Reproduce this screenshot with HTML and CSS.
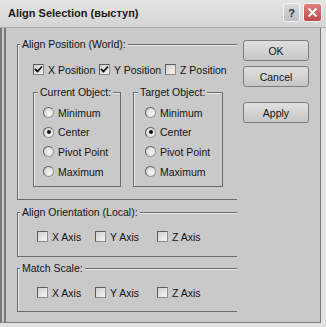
FILE: index.html
```html
<!DOCTYPE html>
<html lang="en">
<head>
  <meta charset="UTF-8">
  <title>Align Selection</title>
  <link rel="stylesheet" href="styles.css">
</head>
<body>
  <div class="dialog">
    <div class="titlebar">
      <span class="title">Align Selection (выступ)</span>
      <div class="title-buttons">
        <span class="tbtn help">?</span>
        <span class="tbtn close">
          <svg width="11" height="11" viewBox="0 0 11 11"><path d="M1.5 1.5 L9.5 9.5 M9.5 1.5 L1.5 9.5" stroke="#fff" stroke-width="2" /></svg>
        </span>
      </div>
    </div>

    <div class="content">
      <div class="groups">

        <fieldset class="group pos">
          <legend>Align Position (World):</legend>
          <div class="inner pos-inner">
            <div class="checks">
              <label class="check w66"><span class="box"><svg width="9" height="9" viewBox="0 0 9 9"><path d="M1 4 L3.5 6.5 L8 1.5" stroke="#111" stroke-width="1.8" fill="none" /></svg></span>X Position</label>
              <label class="check w66"><span class="box"><svg width="9" height="9" viewBox="0 0 9 9"><path d="M1 4 L3.5 6.5 L8 1.5" stroke="#111" stroke-width="1.8" fill="none" /></svg></span>Y Position</label>
              <label class="check"><span class="box"></span>Z Position</label>
            </div>
            <div class="subgroups">
              <fieldset class="sub current">
                <legend>Current Object:</legend>
                <div class="radios">
                  <div class="radio"><span class="dot"></span>Minimum</div>
                  <div class="radio"><span class="dot on"></span>Center</div>
                  <div class="radio"><span class="dot"></span>Pivot Point</div>
                  <div class="radio"><span class="dot"></span>Maximum</div>
                </div>
              </fieldset>
              <fieldset class="sub target">
                <legend>Target Object:</legend>
                <div class="radios">
                  <div class="radio"><span class="dot"></span>Minimum</div>
                  <div class="radio"><span class="dot on"></span>Center</div>
                  <div class="radio"><span class="dot"></span>Pivot Point</div>
                  <div class="radio"><span class="dot"></span>Maximum</div>
                </div>
              </fieldset>
            </div>
          </div>
        </fieldset>

        <fieldset class="group orient">
          <legend>Align Orientation (Local):</legend>
          <div class="inner axes">
            <label class="check w58"><span class="box"></span>X Axis</label>
            <label class="check w62"><span class="box"></span>Y Axis</label>
            <label class="check"><span class="box"></span>Z Axis</label>
          </div>
        </fieldset>

        <fieldset class="group scale">
          <legend>Match Scale:</legend>
          <div class="inner axes">
            <label class="check w58"><span class="box"></span>X Axis</label>
            <label class="check w62"><span class="box"></span>Y Axis</label>
            <label class="check"><span class="box"></span>Z Axis</label>
          </div>
        </fieldset>

      </div>

      <div class="buttons">
        <button class="btn">OK</button>
        <button class="btn">Cancel</button>
        <button class="btn apply">Apply</button>
      </div>
    </div>
  </div>
</body>
</html>
```

FILE: styles.css
```css
body {
  margin: 0;
  background: #e2e2e2;
  font-family: 'Liberation Sans', Arial, sans-serif;
  font-size: 10.5px;
  color: #141414;
}

.dialog {
  width: 326px;
  height: 327px;
}

/* title bar */
.titlebar {
  height: 28px;
  box-sizing: border-box;
  display: flex;
  align-items: center;
  justify-content: space-between;
  padding: 0 4px 2px 8px;
  background: linear-gradient(#e4e4e4, #d4d4d4);
  border-bottom: 1px solid #a8a8a8;
}

.title {
  font-weight: bold;
  font-size: 11px;
  color: #1a1a1a;
}

.title-buttons {
  display: flex;
  gap: 3px;
}

.tbtn {
  height: 19px;
  box-sizing: border-box;
  border: 1px solid #f4f4f4;
  border-radius: 3px;
  display: flex;
  align-items: center;
  justify-content: center;
}

.help {
  width: 17px;
  background: linear-gradient(#d8dce0, #b8bec4);
  font-weight: bold;
  font-size: 11px;
  color: #333;
}

.close {
  width: 19px;
  background: linear-gradient(#e08080, #c04848);
}

/* body */
.content {
  width: 321px;
  height: 295px;
  box-sizing: border-box;
  background: #c9c9c9;
  border-left: 6px double #787878;
  border-right: 1px solid #787878;
  border-bottom: 1px solid #787878;
  display: flex;
  gap: 6px;
  padding: 10px 0 0 11px;
}

.groups {
  width: 220px;
  display: flex;
  flex-direction: column;
}

fieldset {
  margin: 0;
  padding: 0;
  min-width: 0;
  border: 1px solid #6a6a6a;
  box-shadow: inset 1px 1px 0 #ebebeb;
}

legend {
  margin-left: 2px;
  padding: 0 2px;
  line-height: 13px;
  background: #c9c9c9;
}

.group {
  border-right: none;
}

.pos-inner {
  padding: 12px 0 12px 15px;
}

.orient {
  margin-top: 6px;
}

.scale {
  margin-top: 5px;
}

.axes {
  display: flex;
  padding: 11px 0 12px 19px;
}

.orient .axes {
  padding-bottom: 13px;
}

.checks {
  display: flex;
}

.check {
  display: flex;
  align-items: center;
  gap: 4px;
  height: 13px;
}

.w66 { width: 66px; }
.w58 { width: 58px; }
.w62 { width: 62px; }

.box {
  width: 11px;
  height: 11px;
  box-sizing: border-box;
  border: 1px solid #8c8c8c;
  border-top-color: #5c5c5c;
  border-left-color: #5c5c5c;
  background: linear-gradient(135deg, #d0d0d0, #f4f4f4);
  display: flex;
  align-items: center;
  justify-content: center;
}

.subgroups {
  display: flex;
  gap: 12px;
  margin-top: 10px;
}

.sub legend {
  margin-left: 4px;
}

.current {
  width: 88px;
  box-sizing: border-box;
}

.target {
  width: 90px;
  box-sizing: border-box;
}

.radios {
  padding: 4px 0 5px 9px;
}

.target .radios {
  padding-left: 11px;
}

.radio {
  display: flex;
  align-items: center;
  gap: 4px;
  height: 19.6px;
}

.dot {
  width: 11px;
  height: 11px;
  box-sizing: border-box;
  border-radius: 50%;
  border: 1px solid #9a9a9a;
  border-top-color: #606060;
  border-left-color: #606060;
  background: radial-gradient(circle at 65% 65%, #f6f6f6, #cfcfcf);
  display: flex;
  align-items: center;
  justify-content: center;
}

.dot.on::after {
  content: '';
  width: 4px;
  height: 4px;
  border-radius: 50%;
  background: #111;
}

/* buttons */
.buttons {
  display: flex;
  flex-direction: column;
  gap: 5px;
  padding-top: 2px;
}

.btn {
  width: 66px;
  height: 21px;
  padding: 0;
  border: 1px solid #7c7c7c;
  border-radius: 3px;
  background: linear-gradient(#e0e0e0, #c6c6c6);
  font: inherit;
  color: #141414;
}

.apply {
  margin-top: 10px;
}
```
